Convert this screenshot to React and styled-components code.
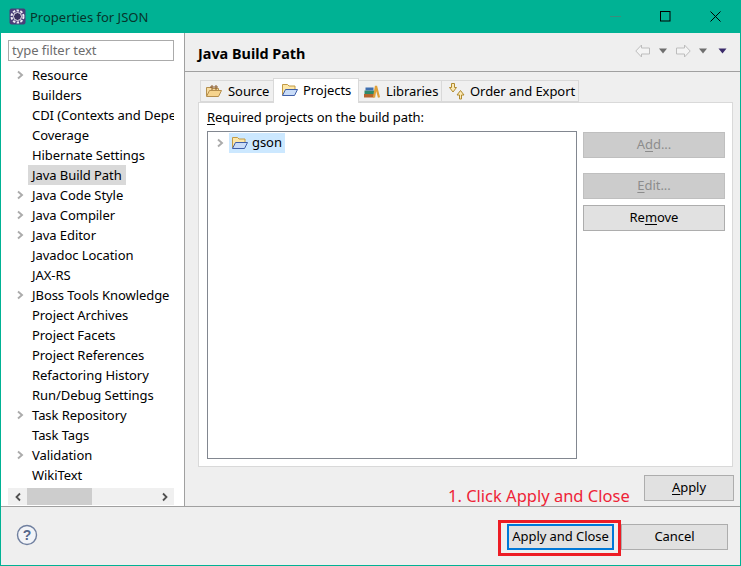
import React from "react";
import styled, { createGlobalStyle } from "styled-components";

const Global = createGlobalStyle`
  html, body { margin: 0; padding: 0; background: #efefef; }
  body { font-family: "Noto Sans", "Open Sans", sans-serif; font-size: 13px; letter-spacing: -0.06px; color: #000; }
`;

const Win = styled.div`
  width: 741px; height: 566px; box-sizing: border-box; overflow: hidden;
  display: flex; flex-direction: column;
  border: 1px solid #00b294; border-top: 0;
  background: #efefef;
`;
const TitleBar = styled.div`
  height: 33px; flex: none; background: #00b294; display: flex; align-items: center;
  padding-left: 8px;
`;
const Title = styled.div`
  margin-left: 4px; font-size: 13px; letter-spacing: 0; color: #07352c; flex: 1;
`;
const WinBtn = styled.div`
  width: 50px; height: 33px; display: flex; align-items: center; justify-content: center;
`;
const Body = styled.div`
  flex: 1; min-height: 0; display: flex; border-bottom: 1px solid #a0a0a0;
`;
const Side = styled.div`
  flex: none; background: #fff; border-right: 1px solid #a0a0a0;
  padding: 7px 10px 0 7px; display: flex; flex-direction: column;
  width: 166px;
`;
const Filter = styled.div`
  height: 19px; line-height: 18px; border: 1px solid #ababab; padding-left: 3px;
  color: #6d6d6d; flex: none;
`;
const Tree = styled.div`
  margin-top: 4px; flex: 1; overflow: hidden; width: 166px;
`;
const Row = styled.div`
  height: 20px; line-height: 20px; display: flex; align-items: center; white-space: nowrap;
  padding-left: 20px; position: relative; overflow: hidden;
`;
const Chevron = styled.svg`
  position: absolute; left: 7px; top: 5px;
`;
const RowLabel = styled.span`
  padding: 0 4px; height: 20px; line-height: 20px;
  background: ${p => (p.$sel ? "#d9d9d9" : "transparent")};
`;
const HScroll = styled.div`
  height: 17px; background: #f0f0f0; display: flex; align-items: center; justify-content: space-between;
  position: relative; flex: none; margin-bottom: 1px;
`;
const Thumb = styled.div`
  position: absolute; left: 19px; top: 0; width: 65px; height: 17px; background: #cdcdcd;
`;
const ArrowBox = styled.div`
  width: 19px; height: 17px; display: flex; align-items: center; justify-content: center;
`;
const Main = styled.div`
  flex: 1; min-width: 0; display: flex; flex-direction: column;
`;
const Header = styled.div`
  height: 38px; flex: none; display: flex; align-items: center; padding-left: 13px;
  border-bottom: 1px solid #a0a0a0;
`;
const HeaderTitle = styled.div`
  font-weight: 700; font-size: 14.4px; letter-spacing: 0; flex: 1; color: #000; padding-top: 2px;
`;
const Nav = styled.div`
  display: flex; align-items: center; padding-right: 13px; margin-top: -2px;
`;
const NavGap = styled.span`
  width: ${p => p.$w}px;
`;
const Content = styled.div`
  flex: 1; min-height: 0; display: flex; flex-direction: column; padding: 7px 7px 0 13px;
`;
const Tabs = styled.div`
  display: flex; align-items: flex-end; height: 23px; flex: none; padding-left: 2px;
  position: relative; z-index: 1;
`;
const Tab = styled.div`
  display: flex; align-items: center; gap: ${p => p.$gap || 5}px; box-sizing: border-box; white-space: nowrap;
  height: ${p => (p.$active ? "25px" : "22px")};
  width: ${p => p.$w}px;
  padding-left: ${p => p.$pl}px;
  padding-bottom: ${p => (p.$active ? "3px" : "0")};
  margin-bottom: ${p => (p.$active ? "-1px" : "0")};
  background: ${p => (p.$active ? "#fff" : "#f0f0f0")};
  border: 1px solid #d9d9d9; border-bottom: ${p => (p.$active ? "0" : "1px solid #d9d9d9")};
  margin-left: ${p => (p.$first ? "0" : "-1px")};
  position: relative; z-index: ${p => (p.$active ? 2 : 1)};
`;
const Panel = styled.div`
  height: 363px; flex: none; background: #fff; border: 1px solid #d9d9d9;
  padding: 0 7px 0 8px; display: flex; flex-direction: column;
`;
const PanelLabel = styled.div`
  height: 28px; line-height: 28px; flex: none;
`;
const Key = styled.span`
  text-decoration: underline; text-underline-offset: 2px; text-decoration-thickness: 1px;
`;
const PanelRow = styled.div`
  display: flex; gap: 6px; align-items: flex-start; flex: 1; min-height: 0;
`;
const ListBox = styled.div`
  width: 361px; height: 325px; flex: none; border: 1px solid #828790; background: #fff;
  padding: 1px 0 0 7px;
`;
const ListRow = styled.div`
  display: flex; align-items: center; height: 20px;
`;
const GsonSel = styled.div`
  display: flex; align-items: center; gap: 3px; height: 20px; background: #cce8ff;
  margin-left: 4px; padding: 0 3px 0 2px;
`;
const GsonText = styled.span`
  position: relative; top: -1px;
`;
const Buttons = styled.div`
  width: 142px; flex: none; display: flex; flex-direction: column; padding-top: 1px;
`;
const Btn = styled.div`
  box-sizing: border-box; height: 26px; width: ${p => p.$w || 142}px; flex: none;
  display: flex; align-items: center; justify-content: center; padding-bottom: 2px;
  background: ${p => (p.$disabled ? "#cccccc" : "#e1e1e1")};
  border: ${p => (p.$focus ? "2px solid #0078d7" : `1px solid ${p.$disabled ? "#bfbfbf" : "#adadad"}`)};
  color: ${p => (p.$disabled ? "#8c8c8c" : "#000")};
  margin-bottom: ${p => p.$mb || 0}px;
`;
const ApplyRow = styled.div`
  flex: 1; min-height: 0; display: flex; align-items: flex-start; justify-content: flex-end;
  padding-top: 8px; margin-right: -1px; box-sizing: border-box; position: relative;
`;
const Note = styled.div`
  position: absolute; left: 250px; top: 17px; color: #ee2437; font-size: 16.5px; letter-spacing: 0;
  line-height: 24px; white-space: nowrap;
`;
const Footer = styled.div`
  height: 58px; box-sizing: border-box; flex: none; display: flex; align-items: flex-start;
  padding: 13px 12px 0 15px;
`;
const Help = styled.svg`flex: none; margin-top: 4px;`;
const Spacer = styled.div`flex: 1;`;
const Highlight = styled.div`
  border: 3px solid #ed1c24; padding: 1px 4px 3px 6px; display: flex;
`;
const CancelWrap = styled.div`margin-top: 4px;`;

const ChevPath = () => <path d="M3 1.5 7 5 3 8.5" fill="none" stroke="#ababab" strokeWidth="1.9" />;

const items = [
  ["Resource", 1], ["Builders"], ["CDI (Contexts and Depe"], ["Coverage"], ["Hibernate Settings"],
  ["Java Build Path", 0, 1], ["Java Code Style", 1], ["Java Compiler", 1], ["Java Editor", 1],
  ["Javadoc Location"], ["JAX-RS"], ["JBoss Tools Knowledge", 1], ["Project Archives"], ["Project Facets"],
  ["Project References"], ["Refactoring History"], ["Run/Debug Settings"], ["Task Repository", 1],
  ["Task Tags"], ["Validation", 1], ["WikiText"],
];

const FolderOpen = () => (
  <svg width="18" height="16" viewBox="0 0 18 16">
    <path d="M1.5 13V2.5h5l1.5 1.5h6v3.5" fill="#fde7a8" stroke="#c29a45" />
    <path d="M1.5 13.5 4.5 7.5h12l-3 6z" fill="#c9dcf8" stroke="#3f5fa8" />
  </svg>
);
const SourceIcon = () => (
  <svg width="18" height="16" viewBox="0 0 18 16">
    <path d="M1.5 13V4.5h5l1 1h6v2" fill="#f8dca0" stroke="#b58f4e" />
    <path d="M1.5 13.5 4.5 7.5h12l-3 6z" fill="#f6d48e" stroke="#b58f4e" />
    <path d="M7 2v5M11 2v5M5 4h8" stroke="#8a5a2a" fill="none" />
  </svg>
);
const LibIcon = () => (
  <svg width="17" height="16" viewBox="0 0 17 16">
    <rect x="1" y="11" width="10" height="3.5" fill="#b5652e" />
    <rect x="1.5" y="7.5" width="9.5" height="3.5" fill="#2f8a6a" />
    <rect x="2.5" y="4.5" width="8" height="3" fill="#3f6fb0" />
    <path d="M11 14.5 13 3l3 11.5" fill="none" stroke="#e0a13a" strokeWidth="2.2" />
  </svg>
);
const OrderIcon = () => (
  <svg width="17" height="18" viewBox="0 0 17 18">
    <path d="M3.5 1.5h3v4h2L5 10 1.5 5.5h2z" fill="#fbe9b5" stroke="#b08a2e" />
    <path d="M11.5 17v-4h-2.5L12.5 8.5 16 13h-2.5v4z" fill="#fbe9b5" stroke="#b08a2e" />
  </svg>
);
const NavArrow = ({ flip }) => (
  <svg width="15" height="14" viewBox="0 0 15 14" style={flip ? { transform: "scaleX(-1)" } : undefined}>
    <path d="M.8 7 6.5 1v3h8v6h-8v3z" fill="#f4f4f4" stroke="#bdbdbd" />
  </svg>
);
const Drop = ({ c = "#6e6e6e", w = 8 }) => (
  <svg width={w} height="6" viewBox="0 0 8 6"><path d="M0 .5h8L4 5.5z" fill={c} /></svg>
);

export default function App() {
  return (
    <>
      <Global />
      <Win>
        <TitleBar>
          <svg width="17" height="17" viewBox="0 0 17 17">
            <rect x="0.5" y="0.5" width="16" height="16" rx="2" fill="#4a3f7a" />
            <circle cx="8.5" cy="8.5" r="6" fill="none" stroke="#eeecf4" strokeWidth="2" strokeDasharray="2.4 1.4" />
            <circle cx="8.5" cy="8.5" r="4" fill="#3a3160" stroke="#eeecf4" strokeWidth="1" />
          </svg>
          <Title>Properties for JSON</Title>
          <WinBtn><svg width="11" height="11" viewBox="0 0 11 11"><path d="M0 5.5h11" stroke="#3c8d7c" /></svg></WinBtn>
          <WinBtn><svg width="11" height="11" viewBox="0 0 11 11"><rect x=".5" y=".5" width="9.5" height="9.5" fill="none" stroke="#000" /></svg></WinBtn>
          <WinBtn><svg width="11" height="11" viewBox="0 0 11 11"><path d="M.5.5l10 10M10.5.5l-10 10" stroke="#000" /></svg></WinBtn>
        </TitleBar>
        <Body>
          <Side>
            <Filter>type filter text</Filter>
            <Tree>
              {items.map(([t, c, s]) => (
                <Row key={t}>
                  {c ? <Chevron width="10" height="10" viewBox="0 0 10 10"><ChevPath /></Chevron> : null}
                  <RowLabel $sel={s}>{t}</RowLabel>
                </Row>
              ))}
            </Tree>
            <HScroll>
              <ArrowBox><svg width="8" height="10" viewBox="0 0 8 10"><path d="M6 1.5 2.5 5 6 8.5" fill="none" stroke="#505050" strokeWidth="1.8" /></svg></ArrowBox>
              <Thumb />
              <ArrowBox><svg width="8" height="10" viewBox="0 0 8 10"><path d="M2 1.5 5.5 5 2 8.5" fill="none" stroke="#505050" strokeWidth="1.8" /></svg></ArrowBox>
            </HScroll>
          </Side>
          <Main>
            <Header>
              <HeaderTitle>Java Build Path</HeaderTitle>
              <Nav>
                <NavArrow />
                <NavGap $w={9} />
                <Drop />
                <NavGap $w={9} />
                <NavArrow flip />
                <NavGap $w={8} />
                <Drop />
                <NavGap $w={11} />
                <Drop c="#3a2a6a" w={9} />
              </Nav>
            </Header>
            <Content>
              <Tabs>
                <Tab $first $w={74} $pl={4}><SourceIcon />Source</Tab>
                <Tab $active $w={86} $pl={7} $gap={4}><FolderOpen />Projects</Tab>
                <Tab $w={84} $pl={4} $gap={6}><LibIcon />Libraries</Tab>
                <Tab $w={138} $pl={6}><OrderIcon />Order and Export</Tab>
              </Tabs>
              <Panel>
                <PanelLabel><Key>R</Key>equired projects on the build path:</PanelLabel>
                <PanelRow>
                  <ListBox>
                    <ListRow>
                      <svg width="10" height="10" viewBox="0 0 10 10"><ChevPath /></svg>
                      <GsonSel><FolderOpen /><GsonText>gson</GsonText></GsonSel>
                    </ListRow>
                  </ListBox>
                  <Buttons>
                    <Btn $disabled $mb={15}><span>A<Key>d</Key>d...</span></Btn>
                    <Btn $disabled $mb={6}><span><Key>E</Key>dit...</span></Btn>
                    <Btn><span>Re<Key>m</Key>ove</span></Btn>
                  </Buttons>
                </PanelRow>
              </Panel>
              <ApplyRow>
                <Note>1. Click Apply and Close</Note>
                <Btn $w={90}><span><Key>A</Key>pply</span></Btn>
              </ApplyRow>
            </Content>
          </Main>
        </Body>
        <Footer>
          <Help width="22" height="22" viewBox="0 0 22 22">
            <circle cx="11" cy="11" r="9.5" fill="#f2f4f8" stroke="#6f7f9f" strokeWidth="1.4" />
            <text x="11" y="16" textAnchor="middle" fontFamily="Liberation Sans" fontWeight="700" fontSize="14" fill="#55678c">?</text>
          </Help>
          <Spacer />
          <Highlight>
            <Btn $focus $w={107}>Apply and Close</Btn>
          </Highlight>
          <CancelWrap><Btn $w={107}>Cancel</Btn></CancelWrap>
        </Footer>
      </Win>
    </>
  );
}
